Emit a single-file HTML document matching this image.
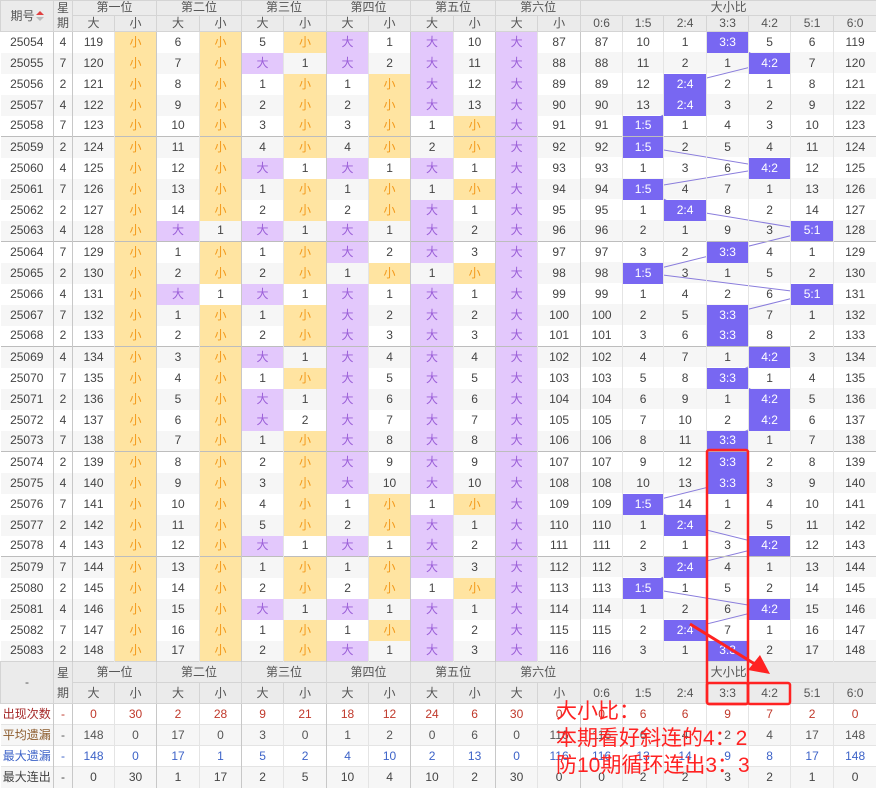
<!DOCTYPE html>
<html><head><meta charset="utf-8">
<style>
*{margin:0;padding:0;box-sizing:border-box}
body{width:876px;height:787px;overflow:hidden;background:#fff;position:relative;font-family:"Liberation Sans","Noto Sans CJK SC",sans-serif;font-size:12px;color:#444}
table{border-collapse:collapse;table-layout:fixed;width:876px;position:absolute;left:0;top:0;z-index:1}
td,th{text-align:center;white-space:nowrap;overflow:hidden;padding:0;font-weight:normal;line-height:13px}
th{background:#ebebeb;color:#555;border:1px solid #d4d4d4}
tbody.d tr{height:21px}
tbody.d td{border-right:1px solid #e4e4e4;background:#fff}
tbody.d tr:nth-child(even) td{background:#f6f6f6}
tbody.d td:nth-child(-n+14):nth-child(even),tbody.d td:nth-child(1),tbody.d td:nth-child(14){border-right:1px solid #c8c8c8}
tbody.d tr.t td{border-top:1px solid #bdbdbd}
tbody.d td:nth-child(n+15){background:transparent!important}
tbody.d td.s{background:#ffe4a1!important;color:#f39a1c}
tbody.d td.b{background:#e3c8fc!important;color:#9b5fd8}
tbody.d td.h{background:#7867f2!important;color:#fff}
tbody.f td{border-right:1px solid #e4e4e4;border-top:1px solid #e4e4e4}
tbody.f td:nth-child(-n+14):nth-child(even),tbody.f td:nth-child(1){border-right:1px solid #c8c8c8}
tbody.f tr{height:21px}
tbody.f tr:nth-child(even) td{background:#f6f6f6}
.r1 td{color:#c0392b}.r1 td:first-child{color:#a52a2a}
.r2 td{color:#555}.r2 td:first-child{color:#8b5a2b}
.r3 td{color:#3d63c8}
.r4 td{color:#444}
</style></head><body>
<svg width="876" height="787" style="position:absolute;left:0;top:0;z-index:0">
<g fill="#f6f6f6">
<rect x="580" y="52" width="296" height="21"/><rect x="580" y="94" width="296" height="21"/><rect x="580" y="136" width="296" height="21"/><rect x="580" y="178" width="296" height="21"/><rect x="580" y="220" width="296" height="21"/><rect x="580" y="262" width="296" height="21"/><rect x="580" y="304" width="296" height="21"/><rect x="580" y="346" width="296" height="21"/><rect x="580" y="388" width="296" height="21"/><rect x="580" y="430" width="296" height="21"/><rect x="580" y="472" width="296" height="21"/><rect x="580" y="514" width="296" height="21"/><rect x="580" y="556" width="296" height="21"/><rect x="580" y="598" width="296" height="21"/><rect x="580" y="640" width="296" height="21"/>
</g>
<polyline fill="none" stroke="#8a7ddc" stroke-width="1" points="727,41.5 769,62.5 684.5,83.5 684.5,104.5 642.5,125.5 642.5,146.5 769,167.5 642.5,188.5 684.5,209.5 811.5,230.5 727,251.5 642.5,272.5 811.5,293.5 727,314.5 727,335.5 769,356.5 727,377.5 769,398.5 769,419.5 727,440.5 727,461.5 727,482.5 642.5,503.5 684.5,524.5 769,545.5 684.5,566.5 642.5,587.5 769,608.5 684.5,629.5 727,650.5"/>
</svg>
<table>
<colgroup><col style="width:53px"><col style="width:19px"><col style="width:42px"><col style="width:42px"><col style="width:43px"><col style="width:42px"><col style="width:42px"><col style="width:43px"><col style="width:42px"><col style="width:42px"><col style="width:43px"><col style="width:42px"><col style="width:42px"><col style="width:43px"><col style="width:42px"><col style="width:41px"><col style="width:43px"><col style="width:42px"><col style="width:42px"><col style="width:43px"><col style="width:43px"></colgroup>
<thead>
<tr style="height:14px"><th rowspan="2">期号<svg width="8" height="10" style="vertical-align:-1px;margin-left:1px"><path d="M4 0L8 4H0Z" fill="#e04040"/><path d="M4 10L8 6H0Z" fill="#bbb"/></svg></th><th rowspan="2" style="line-height:15px">星<br>期</th><th colspan="2">第一位</th><th colspan="2">第二位</th><th colspan="2">第三位</th><th colspan="2">第四位</th><th colspan="2">第五位</th><th colspan="2">第六位</th><th colspan="7">大小比</th></tr>
<tr style="height:15px"><th>大</th><th>小</th><th>大</th><th>小</th><th>大</th><th>小</th><th>大</th><th>小</th><th>大</th><th>小</th><th>大</th><th>小</th><th>0:6</th><th>1:5</th><th>2:4</th><th>3:3</th><th>4:2</th><th>5:1</th><th>6:0</th></tr>
</thead>
<tbody class="d">
<tr><td>25054</td><td>4</td><td>119</td><td class="s">小</td><td>6</td><td class="s">小</td><td>5</td><td class="s">小</td><td class="b">大</td><td>1</td><td class="b">大</td><td>10</td><td class="b">大</td><td>87</td><td>87</td><td>10</td><td>1</td><td class="h">3:3</td><td>5</td><td>6</td><td>119</td></tr>
<tr><td>25055</td><td>7</td><td>120</td><td class="s">小</td><td>7</td><td class="s">小</td><td class="b">大</td><td>1</td><td class="b">大</td><td>2</td><td class="b">大</td><td>11</td><td class="b">大</td><td>88</td><td>88</td><td>11</td><td>2</td><td>1</td><td class="h">4:2</td><td>7</td><td>120</td></tr>
<tr><td>25056</td><td>2</td><td>121</td><td class="s">小</td><td>8</td><td class="s">小</td><td>1</td><td class="s">小</td><td>1</td><td class="s">小</td><td class="b">大</td><td>12</td><td class="b">大</td><td>89</td><td>89</td><td>12</td><td class="h">2:4</td><td>2</td><td>1</td><td>8</td><td>121</td></tr>
<tr><td>25057</td><td>4</td><td>122</td><td class="s">小</td><td>9</td><td class="s">小</td><td>2</td><td class="s">小</td><td>2</td><td class="s">小</td><td class="b">大</td><td>13</td><td class="b">大</td><td>90</td><td>90</td><td>13</td><td class="h">2:4</td><td>3</td><td>2</td><td>9</td><td>122</td></tr>
<tr><td>25058</td><td>7</td><td>123</td><td class="s">小</td><td>10</td><td class="s">小</td><td>3</td><td class="s">小</td><td>3</td><td class="s">小</td><td>1</td><td class="s">小</td><td class="b">大</td><td>91</td><td>91</td><td class="h">1:5</td><td>1</td><td>4</td><td>3</td><td>10</td><td>123</td></tr>
<tr class="t"><td>25059</td><td>2</td><td>124</td><td class="s">小</td><td>11</td><td class="s">小</td><td>4</td><td class="s">小</td><td>4</td><td class="s">小</td><td>2</td><td class="s">小</td><td class="b">大</td><td>92</td><td>92</td><td class="h">1:5</td><td>2</td><td>5</td><td>4</td><td>11</td><td>124</td></tr>
<tr><td>25060</td><td>4</td><td>125</td><td class="s">小</td><td>12</td><td class="s">小</td><td class="b">大</td><td>1</td><td class="b">大</td><td>1</td><td class="b">大</td><td>1</td><td class="b">大</td><td>93</td><td>93</td><td>1</td><td>3</td><td>6</td><td class="h">4:2</td><td>12</td><td>125</td></tr>
<tr><td>25061</td><td>7</td><td>126</td><td class="s">小</td><td>13</td><td class="s">小</td><td>1</td><td class="s">小</td><td>1</td><td class="s">小</td><td>1</td><td class="s">小</td><td class="b">大</td><td>94</td><td>94</td><td class="h">1:5</td><td>4</td><td>7</td><td>1</td><td>13</td><td>126</td></tr>
<tr><td>25062</td><td>2</td><td>127</td><td class="s">小</td><td>14</td><td class="s">小</td><td>2</td><td class="s">小</td><td>2</td><td class="s">小</td><td class="b">大</td><td>1</td><td class="b">大</td><td>95</td><td>95</td><td>1</td><td class="h">2:4</td><td>8</td><td>2</td><td>14</td><td>127</td></tr>
<tr><td>25063</td><td>4</td><td>128</td><td class="s">小</td><td class="b">大</td><td>1</td><td class="b">大</td><td>1</td><td class="b">大</td><td>1</td><td class="b">大</td><td>2</td><td class="b">大</td><td>96</td><td>96</td><td>2</td><td>1</td><td>9</td><td>3</td><td class="h">5:1</td><td>128</td></tr>
<tr class="t"><td>25064</td><td>7</td><td>129</td><td class="s">小</td><td>1</td><td class="s">小</td><td>1</td><td class="s">小</td><td class="b">大</td><td>2</td><td class="b">大</td><td>3</td><td class="b">大</td><td>97</td><td>97</td><td>3</td><td>2</td><td class="h">3:3</td><td>4</td><td>1</td><td>129</td></tr>
<tr><td>25065</td><td>2</td><td>130</td><td class="s">小</td><td>2</td><td class="s">小</td><td>2</td><td class="s">小</td><td>1</td><td class="s">小</td><td>1</td><td class="s">小</td><td class="b">大</td><td>98</td><td>98</td><td class="h">1:5</td><td>3</td><td>1</td><td>5</td><td>2</td><td>130</td></tr>
<tr><td>25066</td><td>4</td><td>131</td><td class="s">小</td><td class="b">大</td><td>1</td><td class="b">大</td><td>1</td><td class="b">大</td><td>1</td><td class="b">大</td><td>1</td><td class="b">大</td><td>99</td><td>99</td><td>1</td><td>4</td><td>2</td><td>6</td><td class="h">5:1</td><td>131</td></tr>
<tr><td>25067</td><td>7</td><td>132</td><td class="s">小</td><td>1</td><td class="s">小</td><td>1</td><td class="s">小</td><td class="b">大</td><td>2</td><td class="b">大</td><td>2</td><td class="b">大</td><td>100</td><td>100</td><td>2</td><td>5</td><td class="h">3:3</td><td>7</td><td>1</td><td>132</td></tr>
<tr><td>25068</td><td>2</td><td>133</td><td class="s">小</td><td>2</td><td class="s">小</td><td>2</td><td class="s">小</td><td class="b">大</td><td>3</td><td class="b">大</td><td>3</td><td class="b">大</td><td>101</td><td>101</td><td>3</td><td>6</td><td class="h">3:3</td><td>8</td><td>2</td><td>133</td></tr>
<tr class="t"><td>25069</td><td>4</td><td>134</td><td class="s">小</td><td>3</td><td class="s">小</td><td class="b">大</td><td>1</td><td class="b">大</td><td>4</td><td class="b">大</td><td>4</td><td class="b">大</td><td>102</td><td>102</td><td>4</td><td>7</td><td>1</td><td class="h">4:2</td><td>3</td><td>134</td></tr>
<tr><td>25070</td><td>7</td><td>135</td><td class="s">小</td><td>4</td><td class="s">小</td><td>1</td><td class="s">小</td><td class="b">大</td><td>5</td><td class="b">大</td><td>5</td><td class="b">大</td><td>103</td><td>103</td><td>5</td><td>8</td><td class="h">3:3</td><td>1</td><td>4</td><td>135</td></tr>
<tr><td>25071</td><td>2</td><td>136</td><td class="s">小</td><td>5</td><td class="s">小</td><td class="b">大</td><td>1</td><td class="b">大</td><td>6</td><td class="b">大</td><td>6</td><td class="b">大</td><td>104</td><td>104</td><td>6</td><td>9</td><td>1</td><td class="h">4:2</td><td>5</td><td>136</td></tr>
<tr><td>25072</td><td>4</td><td>137</td><td class="s">小</td><td>6</td><td class="s">小</td><td class="b">大</td><td>2</td><td class="b">大</td><td>7</td><td class="b">大</td><td>7</td><td class="b">大</td><td>105</td><td>105</td><td>7</td><td>10</td><td>2</td><td class="h">4:2</td><td>6</td><td>137</td></tr>
<tr><td>25073</td><td>7</td><td>138</td><td class="s">小</td><td>7</td><td class="s">小</td><td>1</td><td class="s">小</td><td class="b">大</td><td>8</td><td class="b">大</td><td>8</td><td class="b">大</td><td>106</td><td>106</td><td>8</td><td>11</td><td class="h">3:3</td><td>1</td><td>7</td><td>138</td></tr>
<tr class="t"><td>25074</td><td>2</td><td>139</td><td class="s">小</td><td>8</td><td class="s">小</td><td>2</td><td class="s">小</td><td class="b">大</td><td>9</td><td class="b">大</td><td>9</td><td class="b">大</td><td>107</td><td>107</td><td>9</td><td>12</td><td class="h">3:3</td><td>2</td><td>8</td><td>139</td></tr>
<tr><td>25075</td><td>4</td><td>140</td><td class="s">小</td><td>9</td><td class="s">小</td><td>3</td><td class="s">小</td><td class="b">大</td><td>10</td><td class="b">大</td><td>10</td><td class="b">大</td><td>108</td><td>108</td><td>10</td><td>13</td><td class="h">3:3</td><td>3</td><td>9</td><td>140</td></tr>
<tr><td>25076</td><td>7</td><td>141</td><td class="s">小</td><td>10</td><td class="s">小</td><td>4</td><td class="s">小</td><td>1</td><td class="s">小</td><td>1</td><td class="s">小</td><td class="b">大</td><td>109</td><td>109</td><td class="h">1:5</td><td>14</td><td>1</td><td>4</td><td>10</td><td>141</td></tr>
<tr><td>25077</td><td>2</td><td>142</td><td class="s">小</td><td>11</td><td class="s">小</td><td>5</td><td class="s">小</td><td>2</td><td class="s">小</td><td class="b">大</td><td>1</td><td class="b">大</td><td>110</td><td>110</td><td>1</td><td class="h">2:4</td><td>2</td><td>5</td><td>11</td><td>142</td></tr>
<tr><td>25078</td><td>4</td><td>143</td><td class="s">小</td><td>12</td><td class="s">小</td><td class="b">大</td><td>1</td><td class="b">大</td><td>1</td><td class="b">大</td><td>2</td><td class="b">大</td><td>111</td><td>111</td><td>2</td><td>1</td><td>3</td><td class="h">4:2</td><td>12</td><td>143</td></tr>
<tr class="t"><td>25079</td><td>7</td><td>144</td><td class="s">小</td><td>13</td><td class="s">小</td><td>1</td><td class="s">小</td><td>1</td><td class="s">小</td><td class="b">大</td><td>3</td><td class="b">大</td><td>112</td><td>112</td><td>3</td><td class="h">2:4</td><td>4</td><td>1</td><td>13</td><td>144</td></tr>
<tr><td>25080</td><td>2</td><td>145</td><td class="s">小</td><td>14</td><td class="s">小</td><td>2</td><td class="s">小</td><td>2</td><td class="s">小</td><td>1</td><td class="s">小</td><td class="b">大</td><td>113</td><td>113</td><td class="h">1:5</td><td>1</td><td>5</td><td>2</td><td>14</td><td>145</td></tr>
<tr><td>25081</td><td>4</td><td>146</td><td class="s">小</td><td>15</td><td class="s">小</td><td class="b">大</td><td>1</td><td class="b">大</td><td>1</td><td class="b">大</td><td>1</td><td class="b">大</td><td>114</td><td>114</td><td>1</td><td>2</td><td>6</td><td class="h">4:2</td><td>15</td><td>146</td></tr>
<tr><td>25082</td><td>7</td><td>147</td><td class="s">小</td><td>16</td><td class="s">小</td><td>1</td><td class="s">小</td><td>1</td><td class="s">小</td><td class="b">大</td><td>2</td><td class="b">大</td><td>115</td><td>115</td><td>2</td><td class="h">2:4</td><td>7</td><td>1</td><td>16</td><td>147</td></tr>
<tr><td>25083</td><td>2</td><td>148</td><td class="s">小</td><td>17</td><td class="s">小</td><td>2</td><td class="s">小</td><td class="b">大</td><td>1</td><td class="b">大</td><td>3</td><td class="b">大</td><td>116</td><td>116</td><td>3</td><td>1</td><td class="h">3:3</td><td>2</td><td>17</td><td>148</td></tr>
</tbody>
<tbody class="h2">
<tr style="height:21px"><th rowspan="2">-</th><th rowspan="2" style="line-height:20px">星<br>期</th><th colspan="2">第一位</th><th colspan="2">第二位</th><th colspan="2">第三位</th><th colspan="2">第四位</th><th colspan="2">第五位</th><th colspan="2">第六位</th><th colspan="7">大小比</th></tr>
<tr style="height:21px"><th>大</th><th>小</th><th>大</th><th>小</th><th>大</th><th>小</th><th>大</th><th>小</th><th>大</th><th>小</th><th>大</th><th>小</th><th>0:6</th><th>1:5</th><th>2:4</th><th>3:3</th><th>4:2</th><th>5:1</th><th>6:0</th></tr>
</tbody>
<tbody class="f">
<tr class="r1"><td>出现次数</td><td>-</td><td>0</td><td>30</td><td>2</td><td>28</td><td>9</td><td>21</td><td>18</td><td>12</td><td>24</td><td>6</td><td>30</td><td>0</td><td>0</td><td>6</td><td>6</td><td>9</td><td>7</td><td>2</td><td>0</td></tr>
<tr class="r2"><td>平均遗漏</td><td>-</td><td>148</td><td>0</td><td>17</td><td>0</td><td>3</td><td>0</td><td>1</td><td>2</td><td>0</td><td>6</td><td>0</td><td>116</td><td>116</td><td>6</td><td>4</td><td>2</td><td>4</td><td>17</td><td>148</td></tr>
<tr class="r3"><td>最大遗漏</td><td>-</td><td>148</td><td>0</td><td>17</td><td>1</td><td>5</td><td>2</td><td>4</td><td>10</td><td>2</td><td>13</td><td>0</td><td>116</td><td>116</td><td>13</td><td>14</td><td>9</td><td>8</td><td>17</td><td>148</td></tr>
<tr class="r4"><td>最大连出</td><td>-</td><td>0</td><td>30</td><td>1</td><td>17</td><td>2</td><td>5</td><td>10</td><td>4</td><td>10</td><td>2</td><td>30</td><td>0</td><td>0</td><td>2</td><td>2</td><td>3</td><td>2</td><td>1</td><td>0</td></tr>
</tbody>
</table>
<svg width="876" height="787" style="position:absolute;left:0;top:0;z-index:2">
<g fill="none" stroke="#f22" stroke-width="2.5">
<rect x="707" y="450" width="41" height="254" rx="2"/>
<rect x="707" y="683" width="41" height="21" rx="2"/>
<rect x="748" y="683" width="42" height="21" rx="2"/>
</g>
<line x1="690" y1="624" x2="758" y2="666" stroke="#f22" stroke-width="3"/>
<path d="M770 674L748 670L760 655Z" fill="#f22"/>
</svg>
<div style="position:absolute;left:556px;top:698px;z-index:3;color:#f22;font-size:21px;line-height:27px;font-family:'Liberation Sans','Noto Sans CJK SC',sans-serif;white-space:nowrap">大小比：<br>本期看好斜连的4：2<br>防10期循环连出3：3</div>
</body></html>
